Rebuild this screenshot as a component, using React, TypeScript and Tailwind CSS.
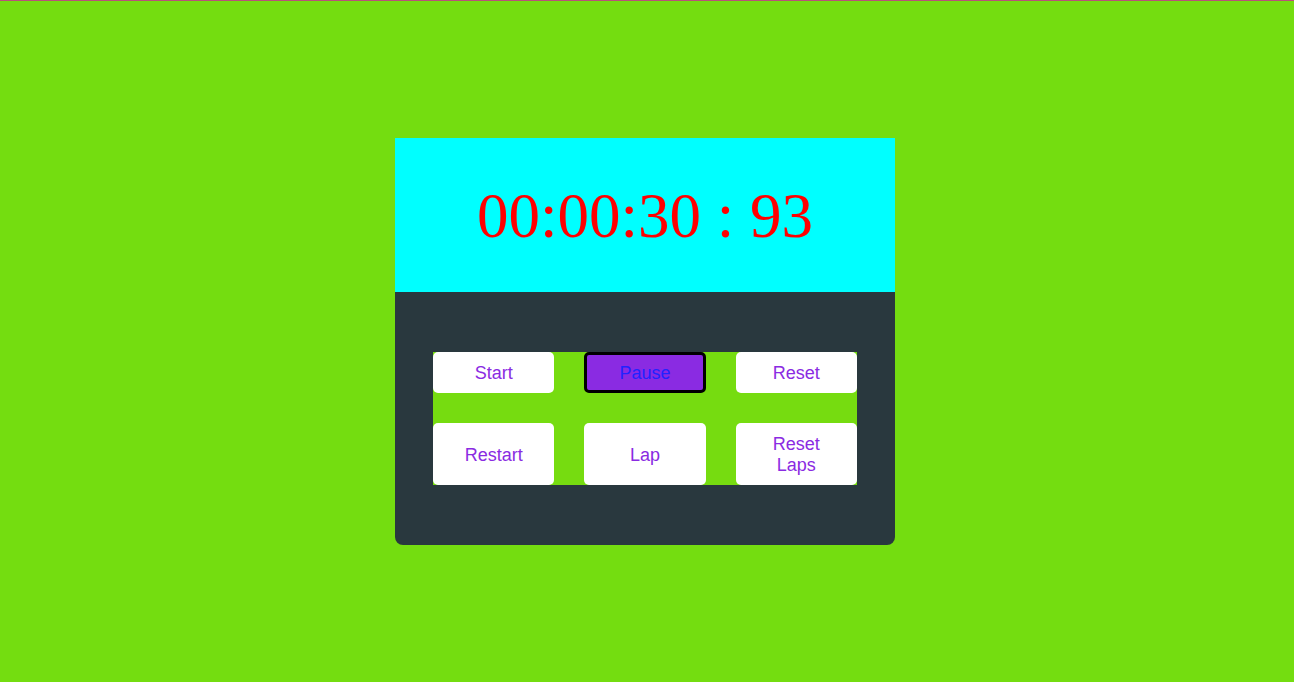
import React from "react";

const buttons = ["Start", "Pause", "Reset", "Restart", "Lap", "Reset Laps"];

const App = () => {
  return (
    <div className="min-h-[682px] w-full bg-[#74dd10] border-t border-[#b9507a] flex justify-center pt-[137px] pr-[4px]">
      <div className="w-[500px] h-fit bg-[#29383e] rounded-lg">
        <div className="h-[154px] bg-[#00ffff] flex items-center justify-center">
          <span className="text-[63px] leading-none text-[#ff0000] font-['Liberation_Serif',serif] pt-[2px]">
            00:00:30 : 93
          </span>
        </div>
        <div className="px-[38px] py-[60px]">
          <div className="grid grid-cols-3 gap-[30px] bg-[#76dc10] font-['Liberation_Sans',Arial,sans-serif]">
            {buttons.map((label) => (
              <button
                key={label}
                className={
                  label === "Pause"
                    ? "bg-[#8a2be2] text-[#2222ff] border-[3px] border-black rounded-[5px] pt-[8px] pb-[6px] px-6 text-[18px] leading-[21px]"
                    : "bg-white text-[#8a2be2] rounded-[5px] pt-[11px] pb-[9px] px-6 text-[18px] leading-[21px]"
                }
              >
                {label}
              </button>
            ))}
          </div>
        </div>
      </div>
    </div>
  );
};

export default App;
